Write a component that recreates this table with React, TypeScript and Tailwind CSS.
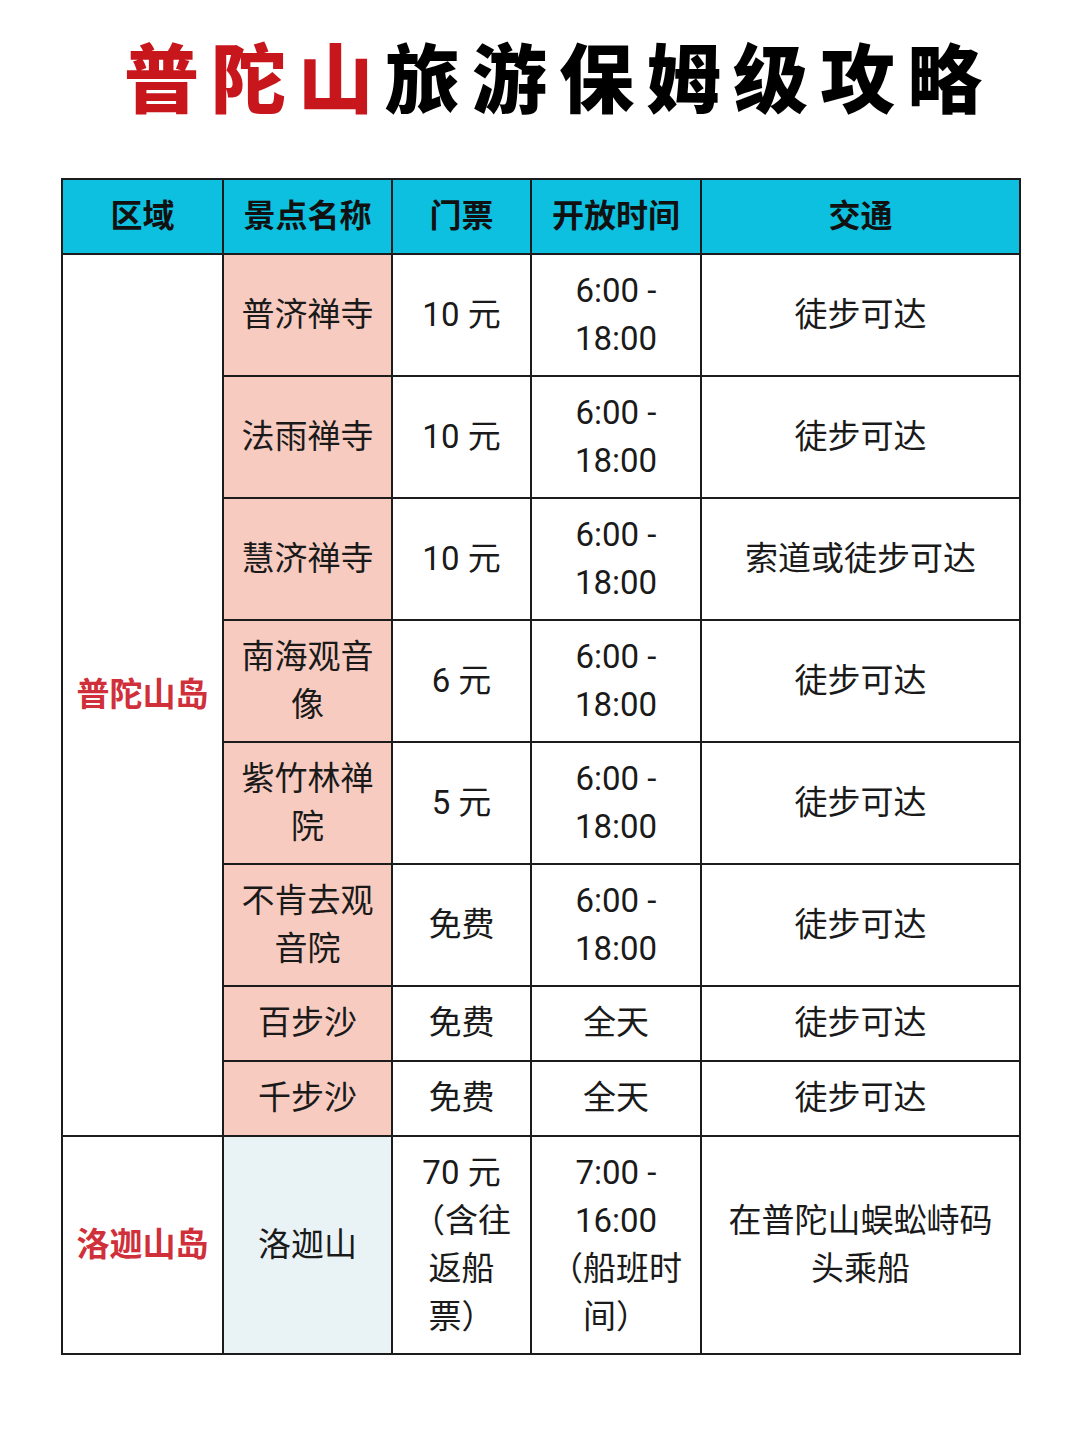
import React from 'react';

const FONT = { fontFamily: '"Noto Sans CJK SC", "Noto Sans", sans-serif' };
const BODY = { fontFamily: 'Roboto, "Noto Sans CJK SC", sans-serif' };

type Row = {
  name: string;
  ticket: string;
  time: string;
  traffic: string;
  tall: boolean;
};

const rows: Row[] = [
  { name: '普济禅寺', ticket: '10 元', time: '6:00 - 18:00', traffic: '徒步可达', tall: true },
  { name: '法雨禅寺', ticket: '10 元', time: '6:00 - 18:00', traffic: '徒步可达', tall: true },
  { name: '慧济禅寺', ticket: '10 元', time: '6:00 - 18:00', traffic: '索道或徒步可达', tall: true },
  { name: '南海观音像', ticket: '6 元', time: '6:00 - 18:00', traffic: '徒步可达', tall: true },
  { name: '紫竹林禅院', ticket: '5 元', time: '6:00 - 18:00', traffic: '徒步可达', tall: true },
  { name: '不肯去观音院', ticket: '免费', time: '6:00 - 18:00', traffic: '徒步可达', tall: true },
  { name: '百步沙', ticket: '免费', time: '全天', traffic: '徒步可达', tall: false },
  { name: '千步沙', ticket: '免费', time: '全天', traffic: '徒步可达', tall: false },
];

const cell = 'border-2 border-[#1c1c1c] text-center align-middle px-4 pb-[1px] text-[33px] leading-[48px] text-[#1a1a1a]';
const head = 'border-2 border-[#1c1c1c] text-center align-middle pb-[2px] text-[32px] font-bold text-[#111]';
const region = 'border-2 border-[#1c1c1c] text-center align-middle text-[33px] font-bold text-[#d0303a]';

export default function App() {
  return (
    <div className="w-[1080px] h-[1443px] bg-white" style={FONT}>
      <h1 className="pt-[33px] pb-[61px] pl-[38px] text-center text-[75px] leading-[84px] font-black tracking-[12px] text-black">
        <span className="text-[#c8161d]">普陀山</span>旅游保姆级攻略
      </h1>
      <table className="ml-[61px] w-[958px] border-collapse table-fixed" style={BODY}>
        <colgroup>
          <col className="w-[161px]" />
          <col className="w-[169px]" />
          <col className="w-[139px]" />
          <col className="w-[170px]" />
          <col className="w-[319px]" />
        </colgroup>
        <thead>
          <tr className="h-[75px] bg-[#0ec0df]">
            <th className={head}>区域</th>
            <th className={head}>景点名称</th>
            <th className={head}>门票</th>
            <th className={head}>开放时间</th>
            <th className={head}>交通</th>
          </tr>
        </thead>
        <tbody>
          {rows.map((r, i) => (
            <tr key={r.name} className={r.tall ? 'h-[122px]' : 'h-[75px]'}>
              {i === 0 && (
                <td rowSpan={8} className={region}>
                  普陀山岛
                </td>
              )}
              <td className={cell + ' bg-[#f8cbc0]'}>{r.name}</td>
              <td className={cell}>{r.ticket}</td>
              <td className={cell}>{r.time}</td>
              <td className={cell}>{r.traffic}</td>
            </tr>
          ))}
          <tr className="h-[218px]">
            <td className={region}>洛迦山岛</td>
            <td className={cell + ' bg-[#e9f3f5]'}>洛迦山</td>
            <td className={cell}>70 元（含往返船票）</td>
            <td className={cell}>7:00 - 16:00（船班时间）</td>
            <td className={cell}>在普陀山蜈蚣峙码头乘船</td>
          </tr>
        </tbody>
      </table>
    </div>
  );
}
